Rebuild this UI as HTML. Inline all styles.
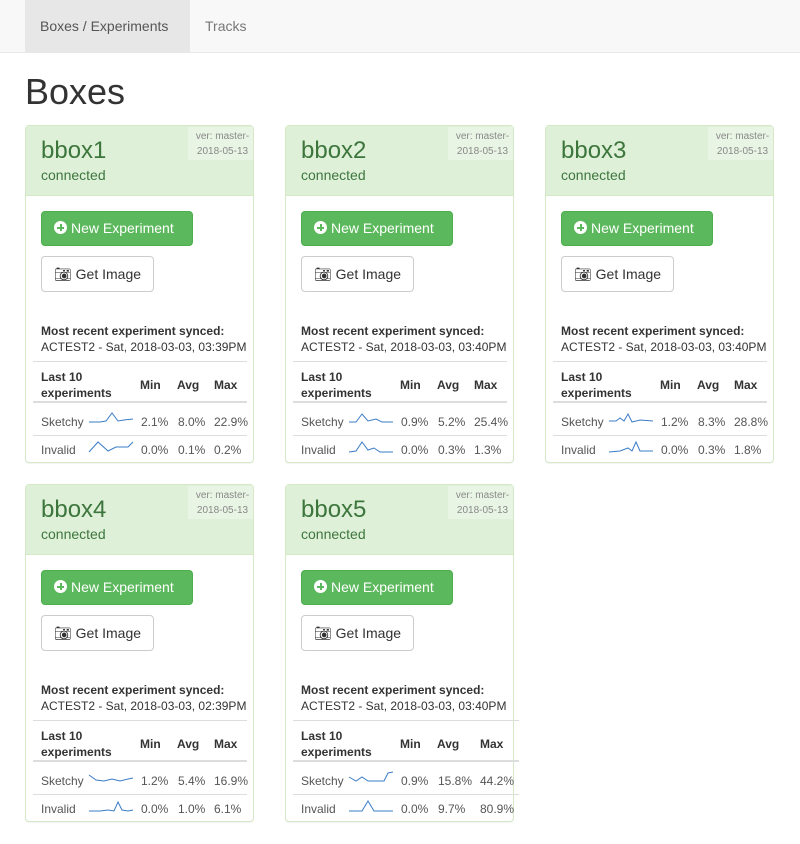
<!DOCTYPE html>
<html><head><meta charset="utf-8"><style>
*{box-sizing:border-box}
body{margin:0;width:800px;height:844px;font-family:"Liberation Sans",sans-serif;color:#333;background:#fff;position:relative;overflow:hidden}
.nav{position:absolute;left:0;top:0;width:800px;height:53px;background:#f8f8f8;border-bottom:1px solid #e7e7e7}
.tab{position:absolute;top:0;height:52px;line-height:52px;font-size:14px;color:#777}
h1{position:absolute;left:25px;top:72px;margin:0;font-size:36px;font-weight:400;line-height:40px}
.card{position:absolute;width:229px;height:338px;border:1px solid #d6e9c6;border-radius:4px;background:#fff;box-shadow:0 1px 1px rgba(0,0,0,.05)}
.hd{position:absolute;left:0;top:0;width:227px;height:70px;background:#dff0d8;border-bottom:1px solid #d6e9c6;color:#3c763d}
.ttl{position:absolute;left:15px;top:11px;font-size:24px;line-height:28px}
.con{position:absolute;left:15px;top:40px;font-size:14px;line-height:18px}
.ver{position:absolute;right:0;top:1px;width:65px;height:33px;background:#e9f5e4;color:#888;font-size:10px;line-height:15px;padding:2px 0 0 4px;text-align:center}
.b1{position:absolute;left:15px;top:85px;width:152px;height:35px;background:#5cb85c;border:1px solid #4cae4c;border-radius:4px;color:#fff;font-size:14px;line-height:33px;padding-left:12px}
.b2{position:absolute;left:15px;top:130px;width:113px;height:36px;background:#fff;border:1px solid #ccc;border-radius:4px;color:#333;font-size:14px;line-height:34px;padding-left:12px}
.plus{display:inline-block;width:13px;height:13px;border-radius:50%;background:#fff;position:relative;vertical-align:-1px;margin-right:4px}
.plus:before{content:"";position:absolute;left:5.5px;top:3px;width:2px;height:7px;background:#5cb85c}
.plus:after{content:"";position:absolute;left:3px;top:5.5px;width:7px;height:2px;background:#5cb85c}
.mr{position:absolute;left:15px;top:197px;font-size:12px;line-height:16px}
.mr b{font-weight:700}
.l{position:absolute;height:1px;background:#ddd;left:7px;width:214px}
.t{position:absolute;font-size:12px;line-height:16px}
.hb{font-weight:700}
.g{color:#555}
svg{position:absolute}
</style></head><body>
<div class="nav">
<div class="tab" style="left:25px;width:165px;background:#e7e7e7;color:#555;padding-left:15px">Boxes / Experiments</div>
<div class="tab" style="left:205px">Tracks</div>
</div>
<h1>Boxes</h1>

<!-- card template rendered 5x -->
<div class="card" style="left:25px;top:125px">
<div class="hd"><div class="ttl">bbox1</div><div class="con">connected</div><div class="ver">ver: master-<br>2018-05-13</div></div>
<div class="b1"><span class="plus"></span>New Experiment</div>
<div class="b2">&#128247;&#xFE0E; Get Image</div>
<div class="mr"><b>Most recent experiment synced:</b><br>ACTEST2 - Sat, 2018-03-03, 03:39PM</div>
<div class="l" style="top:235px"></div>
<div class="t hb" style="left:15px;top:243px">Last 10<br>experiments</div>
<div class="t hb" style="left:114px;top:251px">Min</div><div class="t hb" style="left:151px;top:251px">Avg</div><div class="t hb" style="left:188px;top:251px">Max</div>
<div class="l" style="top:275px;height:2px"></div>
<div class="t g" style="left:15px;top:288px">Sketchy</div>
<svg style="left:62px;top:284px" width="46" height="16"><polyline fill="none" stroke="#3a7cc6" stroke-width="1" points="1,12 12,12 18,11 24,3 30,11 36,10 45,9"/></svg>
<div class="t g" style="left:115px;top:288px">2.1%</div><div class="t g" style="left:152px;top:288px">8.0%</div><div class="t g" style="left:188px;top:288px">22.9%</div>
<div class="l" style="top:309px"></div>
<div class="t g" style="left:15px;top:316px">Invalid</div>
<svg style="left:62px;top:312px" width="46" height="16"><polyline fill="none" stroke="#3a7cc6" stroke-width="1" points="1,14 10,4 20,13 28,9 40,9 45,4"/></svg>
<div class="t g" style="left:115px;top:316px">0.0%</div><div class="t g" style="left:152px;top:316px">0.1%</div><div class="t g" style="left:188px;top:316px">0.2%</div>
</div>

<div class="card" style="left:285px;top:125px">
<div class="hd"><div class="ttl">bbox2</div><div class="con">connected</div><div class="ver">ver: master-<br>2018-05-13</div></div>
<div class="b1"><span class="plus"></span>New Experiment</div>
<div class="b2">&#128247;&#xFE0E; Get Image</div>
<div class="mr"><b>Most recent experiment synced:</b><br>ACTEST2 - Sat, 2018-03-03, 03:40PM</div>
<div class="l" style="top:235px"></div>
<div class="t hb" style="left:15px;top:243px">Last 10<br>experiments</div>
<div class="t hb" style="left:114px;top:251px">Min</div><div class="t hb" style="left:151px;top:251px">Avg</div><div class="t hb" style="left:188px;top:251px">Max</div>
<div class="l" style="top:275px;height:2px"></div>
<div class="t g" style="left:15px;top:288px">Sketchy</div>
<svg style="left:62px;top:284px" width="46" height="16"><polyline fill="none" stroke="#3a7cc6" stroke-width="1" points="1,12 8,12 14,4 20,11 28,9 34,12 45,12"/></svg>
<div class="t g" style="left:115px;top:288px">0.9%</div><div class="t g" style="left:152px;top:288px">5.2%</div><div class="t g" style="left:188px;top:288px">25.4%</div>
<div class="l" style="top:309px"></div>
<div class="t g" style="left:15px;top:316px">Invalid</div>
<svg style="left:62px;top:312px" width="46" height="16"><polyline fill="none" stroke="#3a7cc6" stroke-width="1" points="1,14 8,13 14,4 20,12 26,10 32,14 45,14"/></svg>
<div class="t g" style="left:115px;top:316px">0.0%</div><div class="t g" style="left:152px;top:316px">0.3%</div><div class="t g" style="left:188px;top:316px">1.3%</div>
</div>

<div class="card" style="left:545px;top:125px">
<div class="hd"><div class="ttl">bbox3</div><div class="con">connected</div><div class="ver">ver: master-<br>2018-05-13</div></div>
<div class="b1"><span class="plus"></span>New Experiment</div>
<div class="b2">&#128247;&#xFE0E; Get Image</div>
<div class="mr"><b>Most recent experiment synced:</b><br>ACTEST2 - Sat, 2018-03-03, 03:40PM</div>
<div class="l" style="top:235px"></div>
<div class="t hb" style="left:15px;top:243px">Last 10<br>experiments</div>
<div class="t hb" style="left:114px;top:251px">Min</div><div class="t hb" style="left:151px;top:251px">Avg</div><div class="t hb" style="left:188px;top:251px">Max</div>
<div class="l" style="top:275px;height:2px"></div>
<div class="t g" style="left:15px;top:288px">Sketchy</div>
<svg style="left:62px;top:284px" width="46" height="16"><polyline fill="none" stroke="#3a7cc6" stroke-width="1" points="1,11 8,11 12,8 16,11 20,4 24,12 32,10 45,11"/></svg>
<div class="t g" style="left:115px;top:288px">1.2%</div><div class="t g" style="left:152px;top:288px">8.3%</div><div class="t g" style="left:188px;top:288px">28.8%</div>
<div class="l" style="top:309px"></div>
<div class="t g" style="left:15px;top:316px">Invalid</div>
<svg style="left:62px;top:312px" width="46" height="16"><polyline fill="none" stroke="#3a7cc6" stroke-width="1" points="1,14 12,13 20,10 24,13 28,4 32,13 45,13"/></svg>
<div class="t g" style="left:115px;top:316px">0.0%</div><div class="t g" style="left:152px;top:316px">0.3%</div><div class="t g" style="left:188px;top:316px">1.8%</div>
</div>

<div class="card" style="left:25px;top:484px">
<div class="hd"><div class="ttl">bbox4</div><div class="con">connected</div><div class="ver">ver: master-<br>2018-05-13</div></div>
<div class="b1"><span class="plus"></span>New Experiment</div>
<div class="b2">&#128247;&#xFE0E; Get Image</div>
<div class="mr"><b>Most recent experiment synced:</b><br>ACTEST2 - Sat, 2018-03-03, 02:39PM</div>
<div class="l" style="top:235px"></div>
<div class="t hb" style="left:15px;top:243px">Last 10<br>experiments</div>
<div class="t hb" style="left:114px;top:251px">Min</div><div class="t hb" style="left:151px;top:251px">Avg</div><div class="t hb" style="left:188px;top:251px">Max</div>
<div class="l" style="top:275px;height:2px"></div>
<div class="t g" style="left:15px;top:288px">Sketchy</div>
<svg style="left:62px;top:284px" width="46" height="16"><polyline fill="none" stroke="#3a7cc6" stroke-width="1" points="1,6 8,11 16,12 24,10 32,12 40,10 45,9"/></svg>
<div class="t g" style="left:115px;top:288px">1.2%</div><div class="t g" style="left:152px;top:288px">5.4%</div><div class="t g" style="left:188px;top:288px">16.9%</div>
<div class="l" style="top:309px"></div>
<div class="t g" style="left:15px;top:316px">Invalid</div>
<svg style="left:62px;top:312px" width="46" height="16"><polyline fill="none" stroke="#3a7cc6" stroke-width="1" points="1,14 12,14 20,13 26,14 30,5 34,13 40,14 45,13"/></svg>
<div class="t g" style="left:115px;top:316px">0.0%</div><div class="t g" style="left:152px;top:316px">1.0%</div><div class="t g" style="left:188px;top:316px">6.1%</div>
</div>

<div class="card" style="left:285px;top:484px">
<div class="hd"><div class="ttl">bbox5</div><div class="con">connected</div><div class="ver">ver: master-<br>2018-05-13</div></div>
<div class="b1"><span class="plus"></span>New Experiment</div>
<div class="b2">&#128247;&#xFE0E; Get Image</div>
<div class="mr"><b>Most recent experiment synced:</b><br>ACTEST2 - Sat, 2018-03-03, 03:40PM</div>
<div class="l" style="top:235px;width:226px"></div>
<div class="t hb" style="left:15px;top:243px">Last 10<br>experiments</div>
<div class="t hb" style="left:114px;top:251px">Min</div><div class="t hb" style="left:151px;top:251px">Avg</div><div class="t hb" style="left:194px;top:251px">Max</div>
<div class="l" style="top:275px;height:2px;width:226px"></div>
<div class="t g" style="left:15px;top:288px">Sketchy</div>
<svg style="left:62px;top:284px" width="46" height="16"><polyline fill="none" stroke="#3a7cc6" stroke-width="1" points="1,8 8,12 14,8 20,12 28,12 36,12 40,4 45,3"/></svg>
<div class="t g" style="left:115px;top:288px">0.9%</div><div class="t g" style="left:152px;top:288px">15.8%</div><div class="t g" style="left:194px;top:288px">44.2%</div>
<div class="l" style="top:309px;width:226px"></div>
<div class="t g" style="left:15px;top:316px">Invalid</div>
<svg style="left:62px;top:312px" width="46" height="16"><polyline fill="none" stroke="#3a7cc6" stroke-width="1" points="1,14 14,14 20,4 26,14 45,14"/></svg>
<div class="t g" style="left:115px;top:316px">0.0%</div><div class="t g" style="left:152px;top:316px">9.7%</div><div class="t g" style="left:194px;top:316px">80.9%</div>
</div>
</body></html>
